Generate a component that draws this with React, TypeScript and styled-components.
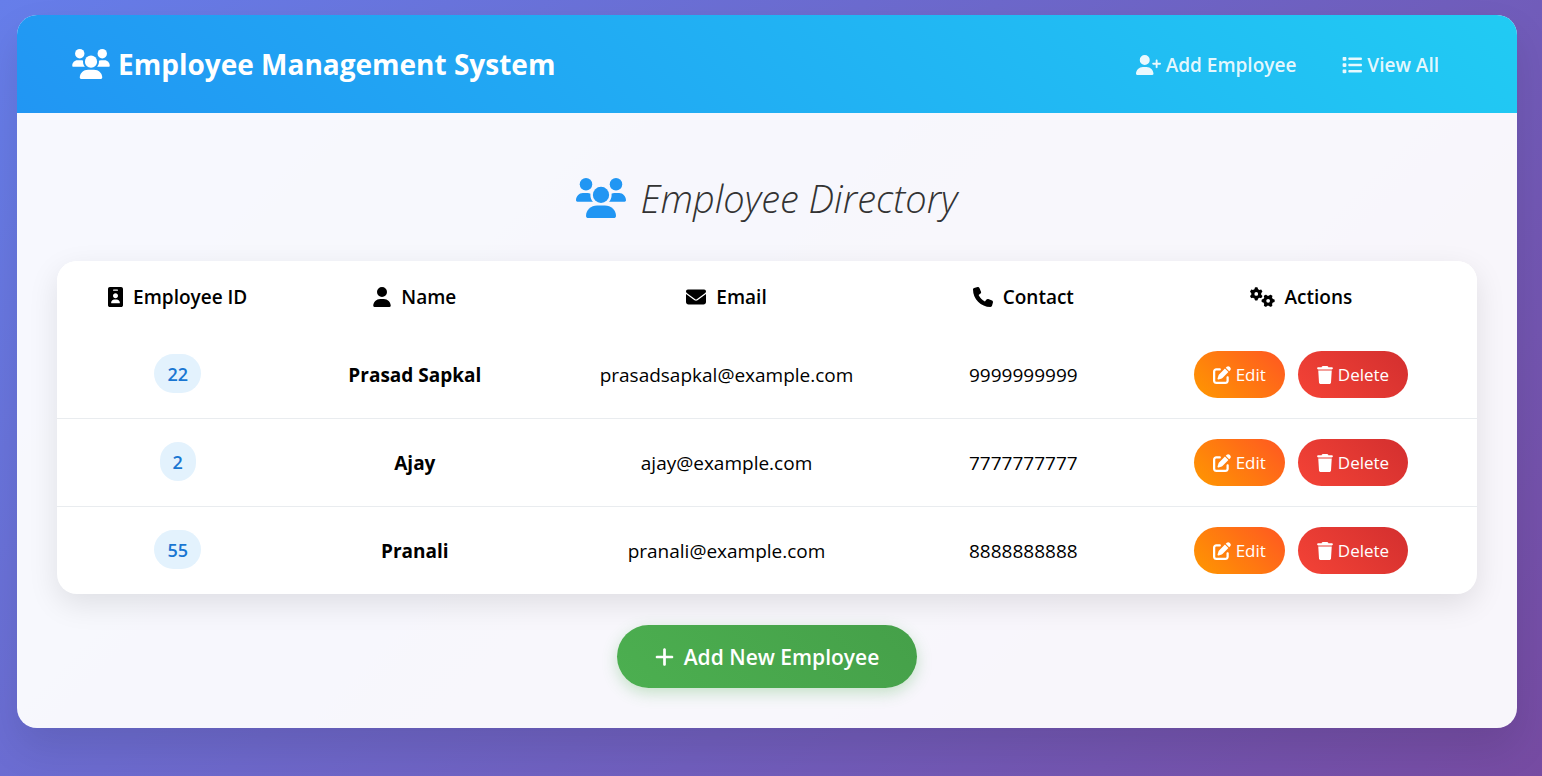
import React from 'react';
import styled, { createGlobalStyle, css } from 'styled-components';
import {
  FaUserPlus,
  FaList,
  FaUser,
  FaEnvelope,
  FaPhone,
  FaGears,
  FaPenToSquare,
  FaTrash,
  FaPlus,
} from 'react-icons/fa6';

const GlobalStyle = createGlobalStyle`
  *, *::before, *::after { box-sizing: border-box; }
  html { min-height: 100%; }
  body {
    margin: 0;
    min-height: 100vh;
    background: linear-gradient(135deg, #667eea 0%, #764ba2 100%);
    font-family: "Open Sans", "Noto Sans", sans-serif;
    font-size: 19px;
    color: #000;
  }
`;

const Icon = styled.span<{ $height: number; $width: number }>`
  display: flex;
  flex: none;
  width: ${({ $width }) => $width}px;
  height: ${({ $height }) => $height}px;

  svg {
    display: block;
    width: 100%;
    height: 100%;
  }
`;

const Page = styled.div`
  padding: 15px 25px 48px 17px;
`;

const Card = styled.div`
  overflow: hidden;
  border-radius: 20px;
  background: rgba(255, 255, 255, 0.95);
  box-shadow: 0 20px 40px rgba(0, 0, 0, 0.1);
`;

const Header = styled.header`
  display: flex;
  align-items: center;
  justify-content: space-between;
  min-height: 98px;
  padding: 0 55px;
  background: linear-gradient(45deg, #2196f3, #21cbf3);
`;

const Brand = styled.a`
  display: flex;
  align-items: center;
  gap: 8px;
  color: #fff;
  font-size: 28px;
  font-weight: 700;
  line-height: 40px;
  text-decoration: none;
`;

const Nav = styled.nav`
  display: flex;
`;

const NavLink = styled.a`
  display: flex;
  align-items: center;
  gap: 5px;
  padding: 9px 23px 8px;
  color: rgba(255, 255, 255, 0.9);
  font-weight: 600;
  line-height: 28px;
  text-decoration: none;
`;

const Content = styled.main`
  padding: 60px 40px 40px;
`;

const Title = styled.h1`
  display: flex;
  align-items: center;
  justify-content: center;
  gap: 14px;
  margin: 0 0 38px;
  color: #333;
  font-size: 38px;
  font-style: italic;
  font-weight: 300;
  line-height: 50px;

  svg { color: #2196f3; }
`;

const TableCard = styled.div`
  overflow: hidden;
  border-radius: 20px;
  background: #fff;
  box-shadow: 0 10px 30px rgba(0, 0, 0, 0.1);
`;

const Table = styled.table`
  width: 100%;
  border-collapse: separate;
  border-spacing: 0;
  table-layout: fixed;
  text-align: center;
`;

const Column = styled.col<{ $share: number }>`
  width: ${({ $share }) => $share}%;
`;

const HeadCell = styled.th`
  height: 70px;
  padding: 2px 0 0;
  background: #fff;
  font-weight: 600;
`;

const HeadLabel = styled.span`
  display: flex;
  align-items: center;
  justify-content: center;
  gap: 10px;
`;

const Cell = styled.td<{ $strong?: boolean }>`
  height: 88px;
  padding: 0;
  border-bottom: 1px solid #e9ecef;
  font-weight: ${({ $strong }) => ($strong ? 700 : 400)};
`;

const Row = styled.tr`
  &:last-child ${Cell} {
    height: 87px;
    border-bottom: 0;
  }
`;

const IdBadge = styled.span`
  display: inline-block;
  margin-bottom: 2px;
  padding: 6px 13px 4px;
  border-radius: 20px;
  background: #e3f2fd;
  color: #1976d2;
  font-size: 18px;
  font-weight: 600;
  line-height: 29px;
`;

const Actions = styled.div`
  display: flex;
  justify-content: center;
  gap: 13px;
`;

const tones = {
  edit: css`background: linear-gradient(45deg, #ff9800, #ff5722);`,
  remove: css`background: linear-gradient(45deg, #f44336, #d32f2f);`,
};

const ActionButton = styled.button<{ $tone: keyof typeof tones }>`
  display: flex;
  align-items: center;
  gap: 5px;
  height: 47px;
  padding: 0 19px;
  border: 0;
  border-radius: 25px;
  color: #fff;
  font: inherit;
  font-size: 17px;
  cursor: pointer;
  ${({ $tone }) => tones[$tone]}
`;

const Footer = styled.div`
  display: flex;
  justify-content: center;
  padding-top: 31px;
`;

const AddButton = styled.button`
  display: flex;
  align-items: center;
  gap: 10px;
  height: 63px;
  padding: 0 38px;
  border: 0;
  border-radius: 32px;
  background: linear-gradient(45deg, #4caf50, #45a049);
  box-shadow: 0 5px 15px rgba(76, 175, 80, 0.3);
  color: #fff;
  font: inherit;
  font-size: 21px;
  font-weight: 600;
  cursor: pointer;
`;

function TeamIcon() {
  return (
    <svg viewBox="0 0 640 512" fill="currentColor" aria-hidden="true">
      <circle cx="128" cy="80" r="80" />
      <circle cx="512" cy="80" r="80" />
      <circle cx="320" cy="216" r="104" />
      <path d="M369.9 352H270.1C191.6 352 128 411.7 128 485.3C128 500.1 140.7 512 156.4 512h327.2C499.3 512 512 500.1 512 485.3C512 411.7 448.4 352 369.9 352z" />
      <path d="M183.9 216c0-5.449 .9824-10.63 1.609-15.91C174.6 194.1 162.6 192 149.9 192H88.08C39.44 192 0 233.8 0 285.3C0 295.6 7.887 304 17.62 304h199.5C196.7 280.2 183.9 249.7 183.9 216z" />
      <path d="M551.9 192h-61.84c-12.8 0-24.88 3.037-35.86 8.24C454.8 205.5 455.8 210.6 455.8 216c0 33.71-12.78 64.21-33.16 88h199.7C632.1 304 640 295.6 640 285.3C640 233.8 600.6 192 551.9 192z" />
    </svg>
  );
}

function BadgeIcon() {
  return (
    <svg viewBox="0 0 384 512" fill="currentColor" fillRule="evenodd" aria-hidden="true">
      <path d="M336 0H48C21.5 0 0 21.5 0 48v416c0 26.5 21.5 48 48 48h288c26.5 0 48-21.5 48-48V48C384 21.5 362.5 0 336 0zM192 160c35.4 0 64 28.6 64 64s-28.6 64-64 64s-64-28.6-64-64S156.600 160 192 160zM288 416H96c-8.800 0-16-7.200-16-16c0-44.200 35.800-80 80-80h64c44.200 0 80 35.800 80 80C304 408.800 296.800 416 288 416zM240 96h-96c-8.800 0-16-7.200-16-16s7.200-16 16-16h96c8.800 0 16 7.200 16 16S248.800 96 240 96z" />
    </svg>
  );
}

const columns = [
  { label: 'Employee ID', icon: <BadgeIcon />, iconWidth: 15, share: 17 },
  { label: 'Name', icon: <FaUser />, iconWidth: 18, share: 16.4 },
  { label: 'Email', icon: <FaEnvelope />, iconWidth: 20, share: 27.5 },
  { label: 'Contact', icon: <FaPhone />, iconWidth: 20, share: 14.3 },
  { label: 'Actions', icon: <FaGears />, iconWidth: 25, share: 24.8 },
];

const employees = [
  { id: 22, name: 'Prasad Sapkal', email: 'prasadsapkal@example.com', contact: '9999999999' },
  { id: 2, name: 'Ajay', email: 'ajay@example.com', contact: '7777777777' },
  { id: 55, name: 'Pranali', email: 'pranali@example.com', contact: '8888888888' },
];

export default function App() {
  return (
    <>
      <GlobalStyle />
      <Page>
        <Card>
          <Header>
            <Brand href="#">
              <Icon $height={30} $width={38}>
                <TeamIcon />
              </Icon>
              Employee Management System
            </Brand>
            <Nav>
              <NavLink href="#add">
                <Icon $height={20} $width={25}>
                  <FaUserPlus />
                </Icon>
                Add Employee
              </NavLink>
              <NavLink href="#all">
                <Icon $height={20} $width={20}>
                  <FaList />
                </Icon>
                View All
              </NavLink>
            </Nav>
          </Header>
          <Content>
            <Title>
              <Icon $height={40} $width={50}>
                <TeamIcon />
              </Icon>
              Employee Directory
            </Title>
            <TableCard>
              <Table>
                <colgroup>
                  {columns.map((c) => (
                    <Column key={c.label} $share={c.share} />
                  ))}
                </colgroup>
                <thead>
                  <tr>
                    {columns.map((c) => (
                      <HeadCell key={c.label} scope="col">
                        <HeadLabel>
                          <Icon $height={20} $width={c.iconWidth}>
                            {c.icon}
                          </Icon>
                          {c.label}
                        </HeadLabel>
                      </HeadCell>
                    ))}
                  </tr>
                </thead>
                <tbody>
                  {employees.map((e) => (
                    <Row key={e.id}>
                      <Cell>
                        <IdBadge>{e.id}</IdBadge>
                      </Cell>
                      <Cell $strong>{e.name}</Cell>
                      <Cell>{e.email}</Cell>
                      <Cell>{e.contact}</Cell>
                      <Cell>
                        <Actions>
                          <ActionButton type="button" $tone="edit">
                            <Icon $height={18} $width={18}>
                              <FaPenToSquare />
                            </Icon>
                            Edit
                          </ActionButton>
                          <ActionButton type="button" $tone="remove">
                            <Icon $height={18} $width={16}>
                              <FaTrash />
                            </Icon>
                            Delete
                          </ActionButton>
                        </Actions>
                      </Cell>
                    </Row>
                  ))}
                </tbody>
              </Table>
            </TableCard>
            <Footer>
              <AddButton type="button">
                <Icon $height={22} $width={19}>
                  <FaPlus />
                </Icon>
                Add New Employee
              </AddButton>
            </Footer>
          </Content>
        </Card>
      </Page>
    </>
  );
}
